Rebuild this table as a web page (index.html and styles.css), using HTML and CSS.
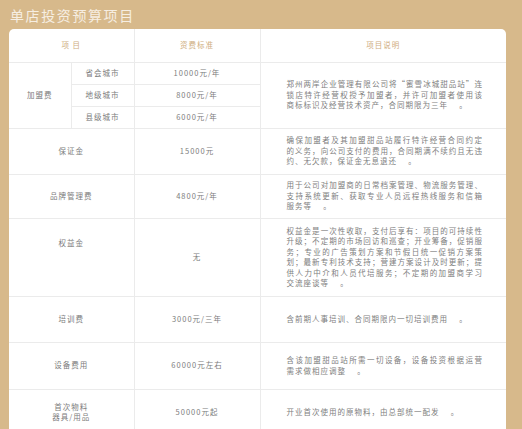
FILE: index.html
```html
<!DOCTYPE html>
<html lang="zh">
<head>
<meta charset="utf-8">
<title>单店投资预算项目</title>
<link rel="stylesheet" href="styles.css">
</head>
<body>
<div class="page">
  <h1 class="title">单店投资预算项目</h1>
  <div class="card">
    <table class="budget">
      <colgroup>
        <col class="c1a"><col class="c1b"><col class="c2"><col class="c3">
      </colgroup>
      <thead>
        <tr class="r-head">
          <th colspan="2">项&nbsp;目</th>
          <th>资费标准</th>
          <th>项目说明</th>
        </tr>
      </thead>
      <tbody>
        <tr class="r-sub">
          <td rowspan="3">加盟费</td>
          <td>省会城市</td>
          <td>10000元/年</td>
          <td rowspan="3" class="desc-cell">
            <div class="desc">
              <span class="ln">郑州两岸企业管理有限公司将“蜜雪冰城甜品站”连</span>
              <span class="ln">锁店特许经营权授予加盟者，并许可加盟者使用该</span>
              <span class="end">商标标识及经营技术资产，合同期限为三年 　。</span>
            </div>
          </td>
        </tr>
        <tr class="r-sub">
          <td>地级城市</td>
          <td>8000元/年</td>
        </tr>
        <tr class="r-sub">
          <td>县级城市</td>
          <td>6000元/年</td>
        </tr>
        <tr class="r-46">
          <td colspan="2">保证金</td>
          <td>15000元</td>
          <td class="desc-cell">
            <div class="desc">
              <span class="ln">确保加盟者及其加盟甜品站履行特许经营合同约定</span>
              <span class="ln">的义务，向公司支付的费用，合同期满不续约且无违</span>
              <span class="end">约、无欠款，保证金无息退还 　。</span>
            </div>
          </td>
        </tr>
        <tr class="r-44">
          <td colspan="2">品牌管理费</td>
          <td>4800元/年</td>
          <td class="desc-cell">
            <div class="desc">
              <span class="ln">用于公司对加盟商的日常档案管理、物流服务管理、</span>
              <span class="ln">支持系统更新、获取专业人员远程热线服务和信箱</span>
              <span class="end">服务等 　。</span>
            </div>
          </td>
        </tr>
        <tr class="r-78">
          <td colspan="2" class="raised">权益金</td>
          <td>无</td>
          <td class="desc-cell">
            <div class="desc">
              <span class="ln">权益金是一次性收取，支付后享有：项目的可持续性</span>
              <span class="ln">升级；不定期的市场回访和巡查；开业筹备，促销服</span>
              <span class="ln">务；专业的广告策划方案和节假日统一促销方案策</span>
              <span class="ln">划；最新专利技术支持；营建方案设计及时更新；提</span>
              <span class="ln">供人力中介和人员代培服务；不定期的加盟商学习</span>
              <span class="end">交流座谈等 　。</span>
            </div>
          </td>
        </tr>
        <tr class="r-46">
          <td colspan="2">培训费</td>
          <td>3000元/三年</td>
          <td class="desc-cell">
            <div class="desc">
              <span class="end">含前期人事培训、合同期限内一切培训费用 　。</span>
            </div>
          </td>
        </tr>
        <tr class="r-47">
          <td colspan="2">设备费用</td>
          <td>60000元左右</td>
          <td class="desc-cell">
            <div class="desc">
              <span class="ln">含该加盟甜品站所需一切设备，设备投资根据运营</span>
              <span class="end">需求做相应调整 　。</span>
            </div>
          </td>
        </tr>
        <tr class="r-46">
          <td colspan="2">首次物料<br>器具/用品</td>
          <td>50000元起</td>
          <td class="desc-cell">
            <div class="desc">
              <span class="end">开业首次使用的原物料，由总部统一配发 　。</span>
            </div>
          </td>
        </tr>
      </tbody>
    </table>
  </div>
</div>
</body>
</html>
```

FILE: styles.css
```css
html, body {
  margin: 0;
  padding: 0;
}

body {
  background: #d7b98b;
  font-family: "Noto Sans CJK SC", "Noto Sans", sans-serif;
  overflow: hidden;
}

.page {
  padding: 0 16px 0 9px;
}

.title {
  margin: 0;
  height: 29px;
  display: flex;
  align-items: center;
  padding-left: 1px;
  font-size: 14px;
  font-weight: 400;
  letter-spacing: 1.6px;
  color: #f6eee2;
}

.card {
  background: #ffffff;
  border-radius: 5px 5px 0 0;
  overflow: hidden;
}

.budget {
  width: 100%;
  border-collapse: collapse;
  border-style: hidden;
  table-layout: fixed;
  font-size: 7.5px;
  line-height: 10.5px;
  letter-spacing: 1px;
  color: #7c7c7c;
}

.c1a { width: 62px; }
.c1b { width: 63px; }
.c2 { width: 126px; }
.c3 { width: 246px; }

.budget th,
.budget td {
  border: 1px solid #ebebeb;
  padding: 0;
  text-align: center;
  vertical-align: middle;
}

.budget th {
  font-weight: 400;
  color: #cfae80;
}

.r-head { height: 33px; }
.r-sub { height: 22px; }
.r-44 { height: 44px; }
.r-46 { height: 46px; }
.r-47 { height: 47px; }
.r-78 { height: 78px; }

.budget td.desc-cell {
  text-align: left;
  padding-left: 26px;
}

.desc {
  width: 196px;
  color: #808080;
}

.desc .ln {
  display: block;
  text-align: justify;
  text-align-last: justify;
  letter-spacing: 0.6px;
}

.desc .end {
  display: block;
}

.budget td.raised {
  padding-bottom: 28px;
}
```
